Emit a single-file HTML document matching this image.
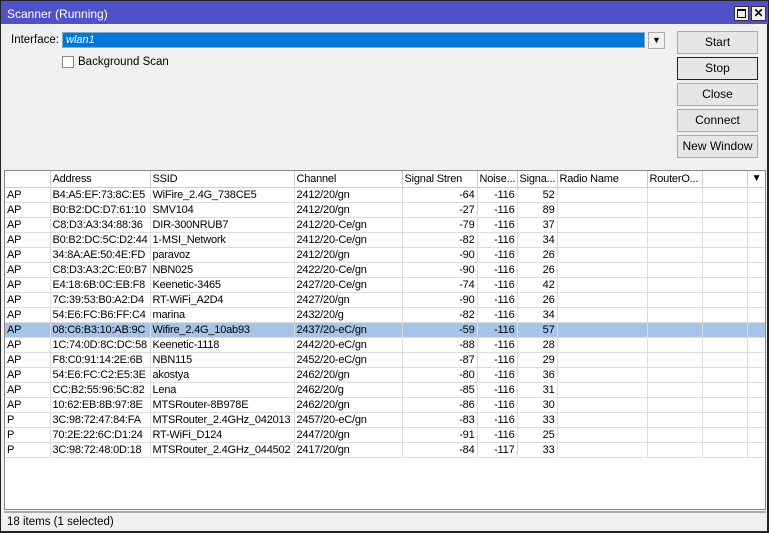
<!DOCTYPE html>
<html><head><style>
*{margin:0;padding:0;box-sizing:border-box}
body{width:769px;height:533px;background:#000;font-family:"Liberation Sans",sans-serif;font-size:11px;color:#000;overflow:hidden;position:relative}
.win{position:absolute;left:0;top:0;width:769px;height:533px;background:#f0f0f0;border:1px solid #222;border-right:2px solid #222;border-bottom:2px solid #222}
.title{position:absolute;left:0;top:0;width:767px;height:23px;background:#5050c8;color:#fff;font-size:12px;padding:6px 0 0 6px}
.tb{position:absolute;top:5px;width:15px;height:15px;background:#f0f0f0;border:1px solid #333}
.lbl{position:absolute;font-size:11.5px}
.iface{position:absolute;left:61px;top:31px;width:583px;height:16px;background:#0078d7;border:1px solid #8ab;color:#fff;font-style:italic;padding:1px 3px}
.dd{position:absolute;left:647px;top:31px;width:17px;height:17px;background:#f0f0f0;border:1px solid #aaa;font-size:9px;text-align:center;line-height:14px}
.cb{position:absolute;left:61px;top:55px;width:12px;height:12px;background:#fff;border:1px solid #888}
.btn{position:absolute;left:676px;width:81px;height:23px;background:#e6e6e6;border:1px solid #aaa;text-align:center;line-height:21px;font-size:12px}
.tbl{position:absolute;left:3px;top:169px;width:762px;height:340px;background:#fff;border:1px solid #888;overflow:hidden}
table{border-collapse:collapse;table-layout:fixed;position:absolute;left:0;top:0;width:761px}
td{height:15px;border-right:1px solid #ddd;border-bottom:1px solid #ddd;padding:0 2px;white-space:nowrap;overflow:hidden;line-height:14px;letter-spacing:-0.2px}
tr.h td{height:16px;border-color:#ccc}
td.r{text-align:right}
tr.sel td{background:#a6c4e8}
.status{position:absolute;left:3px;top:510px;width:762px;height:19px;border-top:2px solid #aaa;padding:3px 3px;font-size:11.5px}
</style></head><body>
<div class="win">
<div class="title">Scanner (Running)</div>
<div class="tb" style="left:733px"><div style="position:absolute;left:2px;top:2px;width:9px;height:9px;border:1px solid #000;border-top-width:2px"></div></div>
<div class="tb" style="left:750px;font-size:12px;font-weight:bold;text-align:center;line-height:13px">✕</div>
<div class="lbl" style="left:10px;top:33px">Interface:</div>
<div class="iface">wlan1</div>
<div class="dd">▼</div>
<div class="cb"></div>
<div class="lbl" style="left:77px;top:55px">Background Scan</div>
<div class="btn" style="top:30px">Start</div>
<div class="btn" style="top:56px;border:1px solid #222">Stop</div>
<div class="btn" style="top:82px">Close</div>
<div class="btn" style="top:108px">Connect</div>
<div class="btn" style="top:134px">New Window</div>
<div class="tbl">
<table>
<colgroup><col style="width:45px"><col style="width:100px"><col style="width:144px"><col style="width:108px"><col style="width:75px"><col style="width:40px"><col style="width:40px"><col style="width:90px"><col style="width:55px"><col style="width:45px"><col style="width:19px"></colgroup>
<tr class="h"><td></td><td>Address</td><td>SSID</td><td>Channel</td><td>Signal Stren</td><td>Noise...</td><td>Signa...</td><td>Radio Name</td><td>RouterO...</td><td></td><td style="font-size:10px;text-align:center">▼</td></tr>
<tr><td>AP</td><td>B4:A5:EF:73:8C:E5</td><td>WiFire_2.4G_738CE5</td><td>2412/20/gn</td><td class="r">-64</td><td class="r">-116</td><td class="r">52</td><td></td><td></td><td></td><td></td></tr>
<tr><td>AP</td><td>B0:B2:DC:D7:61:10</td><td>SMV104</td><td>2412/20/gn</td><td class="r">-27</td><td class="r">-116</td><td class="r">89</td><td></td><td></td><td></td><td></td></tr>
<tr><td>AP</td><td>C8:D3:A3:34:88:36</td><td>DIR-300NRUB7</td><td>2412/20-Ce/gn</td><td class="r">-79</td><td class="r">-116</td><td class="r">37</td><td></td><td></td><td></td><td></td></tr>
<tr><td>AP</td><td>B0:B2:DC:5C:D2:44</td><td>1-MSI_Network</td><td>2412/20-Ce/gn</td><td class="r">-82</td><td class="r">-116</td><td class="r">34</td><td></td><td></td><td></td><td></td></tr>
<tr><td>AP</td><td>34:8A:AE:50:4E:FD</td><td>paravoz</td><td>2412/20/gn</td><td class="r">-90</td><td class="r">-116</td><td class="r">26</td><td></td><td></td><td></td><td></td></tr>
<tr><td>AP</td><td>C8:D3:A3:2C:E0:B7</td><td>NBN025</td><td>2422/20-Ce/gn</td><td class="r">-90</td><td class="r">-116</td><td class="r">26</td><td></td><td></td><td></td><td></td></tr>
<tr><td>AP</td><td>E4:18:6B:0C:EB:F8</td><td>Keenetic-3465</td><td>2427/20-Ce/gn</td><td class="r">-74</td><td class="r">-116</td><td class="r">42</td><td></td><td></td><td></td><td></td></tr>
<tr><td>AP</td><td>7C:39:53:B0:A2:D4</td><td>RT-WiFi_A2D4</td><td>2427/20/gn</td><td class="r">-90</td><td class="r">-116</td><td class="r">26</td><td></td><td></td><td></td><td></td></tr>
<tr><td>AP</td><td>54:E6:FC:B6:FF:C4</td><td>marina</td><td>2432/20/g</td><td class="r">-82</td><td class="r">-116</td><td class="r">34</td><td></td><td></td><td></td><td></td></tr>
<tr class="sel"><td>AP</td><td>08:C6:B3:10:AB:9C</td><td>Wifire_2.4G_10ab93</td><td>2437/20-eC/gn</td><td class="r">-59</td><td class="r">-116</td><td class="r">57</td><td></td><td></td><td></td><td></td></tr>
<tr><td>AP</td><td>1C:74:0D:8C:DC:58</td><td>Keenetic-1118</td><td>2442/20-eC/gn</td><td class="r">-88</td><td class="r">-116</td><td class="r">28</td><td></td><td></td><td></td><td></td></tr>
<tr><td>AP</td><td>F8:C0:91:14:2E:6B</td><td>NBN115</td><td>2452/20-eC/gn</td><td class="r">-87</td><td class="r">-116</td><td class="r">29</td><td></td><td></td><td></td><td></td></tr>
<tr><td>AP</td><td>54:E6:FC:C2:E5:3E</td><td>akostya</td><td>2462/20/gn</td><td class="r">-80</td><td class="r">-116</td><td class="r">36</td><td></td><td></td><td></td><td></td></tr>
<tr><td>AP</td><td>CC:B2:55:96:5C:82</td><td>Lena</td><td>2462/20/g</td><td class="r">-85</td><td class="r">-116</td><td class="r">31</td><td></td><td></td><td></td><td></td></tr>
<tr><td>AP</td><td>10:62:EB:8B:97:8E</td><td>MTSRouter-8B978E</td><td>2462/20/gn</td><td class="r">-86</td><td class="r">-116</td><td class="r">30</td><td></td><td></td><td></td><td></td></tr>
<tr><td>P</td><td>3C:98:72:47:84:FA</td><td>MTSRouter_2.4GHz_042013</td><td>2457/20-eC/gn</td><td class="r">-83</td><td class="r">-116</td><td class="r">33</td><td></td><td></td><td></td><td></td></tr>
<tr><td>P</td><td>70:2E:22:6C:D1:24</td><td>RT-WiFi_D124</td><td>2447/20/gn</td><td class="r">-91</td><td class="r">-116</td><td class="r">25</td><td></td><td></td><td></td><td></td></tr>
<tr><td>P</td><td>3C:98:72:48:0D:18</td><td>MTSRouter_2.4GHz_044502</td><td>2417/20/gn</td><td class="r">-84</td><td class="r">-117</td><td class="r">33</td><td></td><td></td><td></td><td></td></tr>
</table>
</div>
<div class="status">18 items (1 selected)</div>
</div>
</body></html>
